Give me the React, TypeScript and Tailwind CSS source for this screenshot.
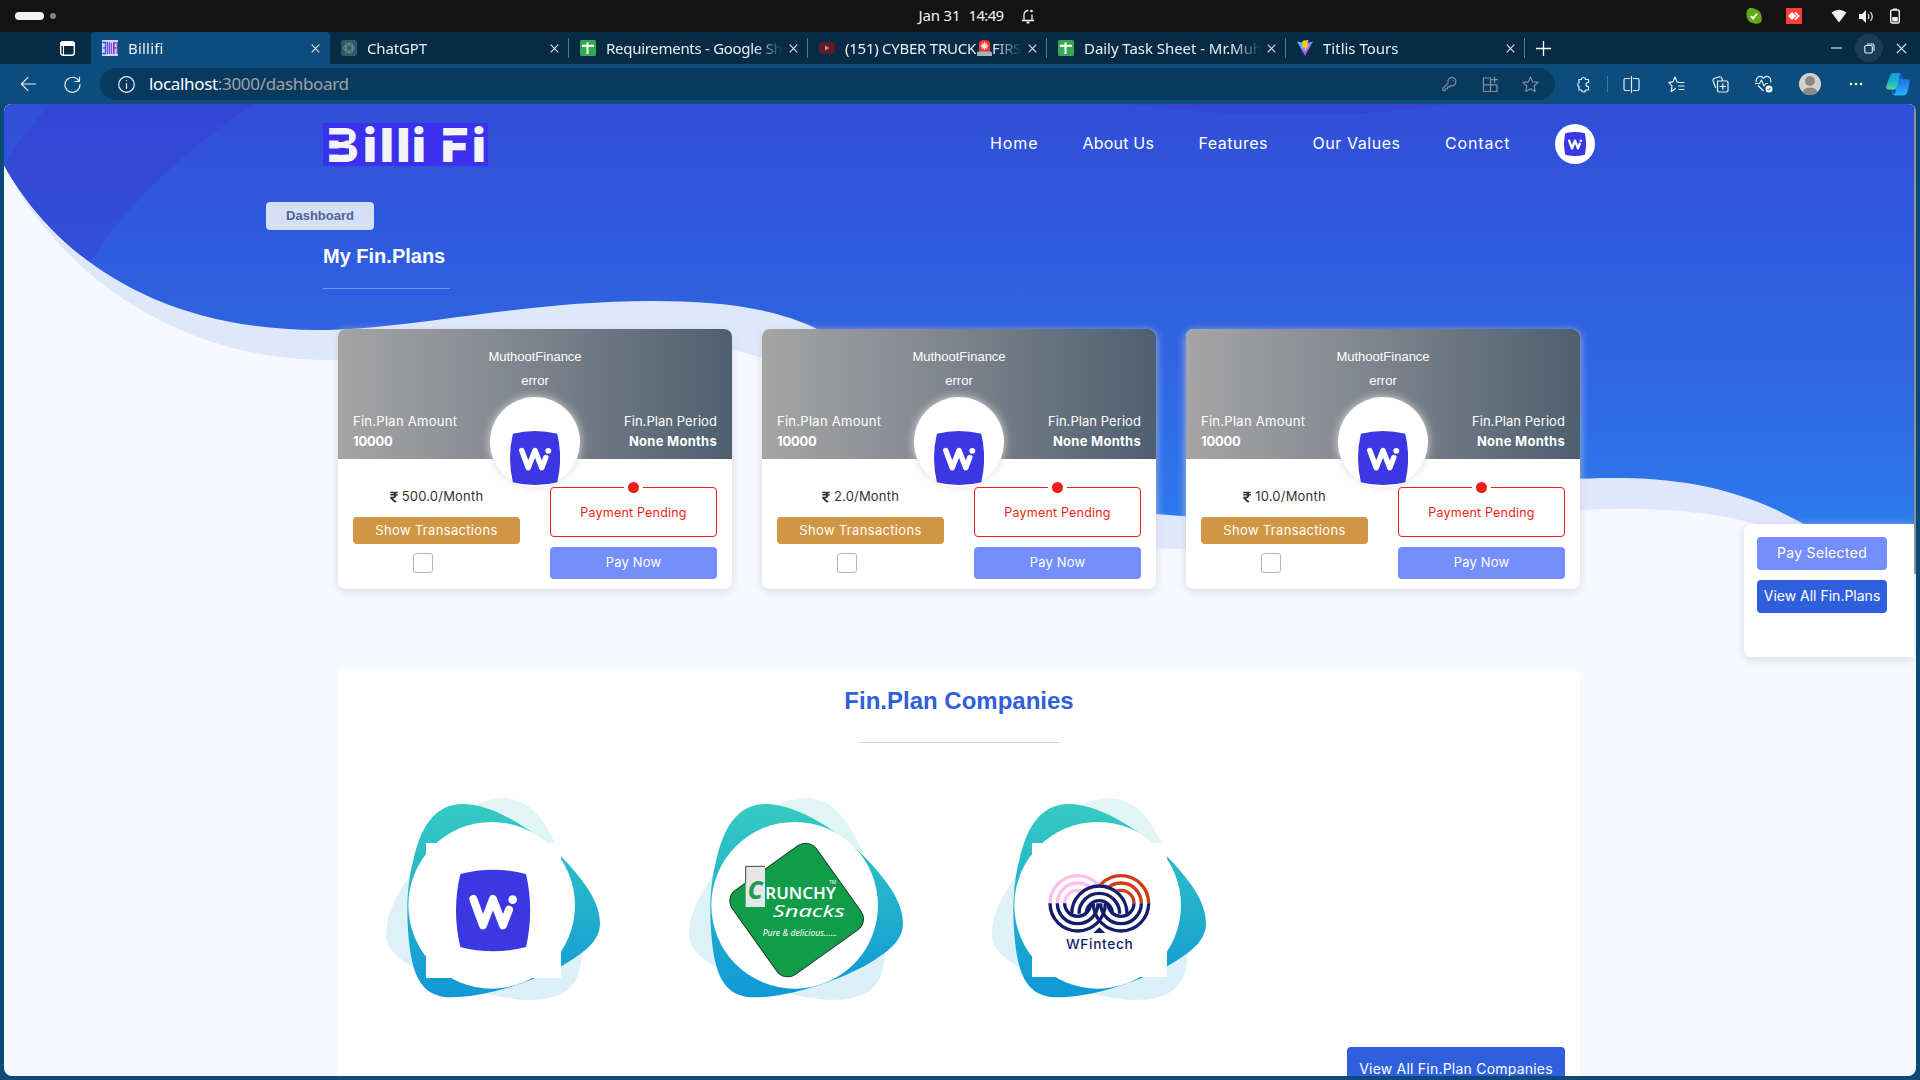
import type { ReactNode } from "react";
import { FaRupeeSign } from "react-icons/fa";

/* ---------- Logos ---------- */

function WiMark({ className }: { className: string }) {
  return (
    <svg className={className} viewBox="288 269 222 245" preserveAspectRatio="none">
      <path d="M301 282Q399 256 498 282Q523 391 498 501Q399 527 301 501Q275 391 301 282Z" fill="#3b37e3" />
      <path d="M340 357L369 436L399 357L429 436L447 389" fill="none" stroke="#fff" strokeWidth="24" strokeLinecap="round" strokeLinejoin="round" />
      <circle cx="458" cy="359" r="13" fill="#fff" />
    </svg>
  );
}

function BilliFiLogo() {
  return (
    <svg className="h-[43px] w-[165px]" viewBox="0 0 165 43">
      <rect width="165" height="43" fill="#3a30ee" />
      <text x="4 40 57 73.5 89 118 149" y="39" fontFamily="Inter, sans-serif" fontWeight="900" fontSize="46.5" fill="#f4f4f6">BilliFi</text>
      <rect x="4" y="11.5" width="22" height="6" fill="#3a30ee" />
      <rect x="4" y="25.5" width="22" height="6" fill="#3a30ee" />
      <rect x="117" y="12.5" width="32" height="5" fill="#3a30ee" />
    </svg>
  );
}

/* ---------- System bar ---------- */

function SystemBar() {
  return (
    <div className="grid h-8 grid-cols-[1fr_auto_1fr] items-center bg-[#131313]">
      <div className="flex items-center gap-1.5 pl-[15px]">
        <span className="h-2 w-[29px] rounded-full bg-[#f2f2f2]" />
        <span className="size-1.5 rounded-full bg-[#868686]" />
      </div>
      <div className="flex translate-x-[17px] items-center pb-[2px] text-[15px] text-[#f2f2f2]">
        <span className="w-[50px] tracking-[-0.14px]">Jan 31</span>
        <span className="w-[51px] tracking-[-0.67px]">14:49</span>
        <svg className="mt-px h-4 w-4" viewBox="0 0 16 16" fill="none" stroke="#f2f2f2" strokeWidth="1.3">
          <path d="M2 12.5H14M4 12V7Q4 2.5 8.5 2.5M12 12V6.5" />
          <path d="M6.5 14.5H9.5" strokeWidth="2" />
          <circle cx="11.5" cy="3" r="1.3" fill="#f2f2f2" stroke="none" />
        </svg>
      </div>
      <div className="flex items-center justify-end pr-5">
        <svg className="mr-6 size-4" viewBox="0 0 16 16">
          <path d="M4 0Q7-.3 9 1Q15 2 15.5 9Q17 15 11 15.800Q8 16 7 15Q1 14 .5 7Q0 1 4 0Z" fill="#62aa14" />
          <path d="M5 8L7 10.500L11 5.500" fill="none" stroke="#fff" strokeWidth="2" />
        </svg>
        <svg className="mr-[29px] size-4" viewBox="0 0 16 16">
          <rect width="16" height="16" fill="#ff3f35" />
          <path d="M2 8L6 4L10 8L6 12Z" fill="#fff" />
          <path d="M9 4.500L12.500 8L9 11.500" fill="none" stroke="#fff" strokeWidth="1.800" />
        </svg>
        <svg className="mr-3 size-4" viewBox="0 0 16 16"><path d="M.5 4.500Q8-1 15.500 4.500L8 14.500Z" fill="#f2f2f2" /></svg>
        <svg className="mr-4 size-[15px]" viewBox="0 0 15 15">
          <path d="M0 5H3L7 1V14L3 10H0Z" fill="#f2f2f2" />
          <path d="M9 5Q10.800 7.500 9 10M11.500 3Q15 7.500 11.500 12" fill="none" stroke="#f2f2f2" strokeWidth="1.200" />
        </svg>
        <svg className="h-4 w-[10px]" viewBox="0 0 10 16">
          <rect x=".7" y="2" width="8.600" height="13" rx="1.500" fill="none" stroke="#f2f2f2" strokeWidth="1.400" />
          <path d="M3 .5H7V2H3ZM2.300 9H7.700V13.500H2.300Z" fill="#f2f2f2" />
        </svg>
      </div>
    </div>
  );
}

/* ---------- Browser tabs ---------- */

const favicons: Record<string, ReactNode> = {
  billifi: (
    <svg className="size-4" viewBox="0 0 16 16">
      <rect width="16" height="16" fill="#d9d2f5" />
      <path d="M.5 2.500H3.500V13.500H.5M1 8H3" fill="none" stroke="#3a4fe0" strokeWidth="1.300" />
      <path d="M5.500 2V14M7.500 2V14" stroke="#5546d8" strokeWidth="1.200" />
      <path d="M9.500 3V14" stroke="#8a45d8" strokeWidth="1.200" />
      <path d="M11.800 14V3H14M11.800 8H14" fill="none" stroke="#7a2fc0" strokeWidth="1.500" />
      <path d="M15.200 2V14" stroke="#3a1c90" strokeWidth="1" />
    </svg>
  ),
  chatgpt: (
    <svg className="size-4" viewBox="0 0 16 16">
      <rect width="16" height="16" rx="3" fill="#2d5a63" />
      <g fill="none" stroke="#6f8f99" strokeWidth=".8">
        <ellipse cx="8" cy="8" rx="5.500" ry="3" />
        <ellipse cx="8" cy="8" rx="5.500" ry="3" transform="rotate(60 8 8)" />
        <ellipse cx="8" cy="8" rx="5.500" ry="3" transform="rotate(120 8 8)" />
      </g>
    </svg>
  ),
  sheet: (
    <svg className="size-4" viewBox="0 0 16 16">
      <rect width="16" height="16" rx="1.500" fill="#34a853" />
      <path d="M2 5.800H14M7.500 2.500V14" stroke="#fff" strokeWidth="2" />
    </svg>
  ),
  youtube: (
    <svg className="size-4" viewBox="0 0 16 16">
      <rect y="2.500" width="16" height="11" rx="3" fill="#6a1625" />
      <path d="M6 5.500L10.500 8L6 10.500Z" fill="#9aa5b0" />
    </svg>
  ),
  vite: (
    <svg className="size-4" viewBox="0 0 16 16">
      <defs>
        <linearGradient id="vite" x1="0" y1="0" x2=".6" y2="1">
          <stop offset="0" stopColor="#41d1ff" />
          <stop offset="1" stopColor="#bd34fe" />
        </linearGradient>
      </defs>
      <path d="M0 1.500L8 16L16 1.500L8 3Z" fill="url(#vite)" />
      <path d="M5.500.8L11.500 0L10 4.500H12L7.500 12L8 7.500H5Z" fill="#ffc820" />
    </svg>
  ),
};

function Siren() {
  return (
    <svg className="ml-px h-4 w-[15px] shrink-0" viewBox="0 0 15 16">
      <path d="M2 12V3Q2.500 0 7.500 0Q12.500 0 13 3V12Z" fill="#f2392c" />
      <path d="M7.500 2V10M3.800 6H11.200M5 3.500L10 8.500M10 3.500L5 8.500" stroke="#ffe3d8" strokeWidth="1.300" />
      <path d="M0 13Q0 11.500 1.500 11.500H13.500Q15 11.500 15 13V16H0Z" fill="#9fb6bf" />
    </svg>
  );
}

const fade = "[mask-image:linear-gradient(to_right,#000_84%,transparent_100%)]";

const tabs: { icon: string; title: ReactNode; track: string; active?: boolean; divider?: boolean }[] = [
  { icon: "billifi", title: "Billifi", track: "tracking-[0.2px]", active: true },
  { icon: "chatgpt", title: "ChatGPT", track: "tracking-[-0.13px]", divider: true },
  { icon: "sheet", title: "Requirements - Google Sh", track: "tracking-[-0.29px]", divider: true },
  { icon: "youtube", title: <>(151) CYBER TRUCK<Siren />FIRS</>, track: "tracking-[-0.26px]", divider: true },
  { icon: "sheet", title: "Daily Task Sheet - Mr.Muh", track: "tracking-[-0.05px]", divider: true },
  { icon: "vite", title: "Titlis Tours", track: "tracking-[0px]", divider: true },
];

function Cross({ className }: { className: string }) {
  return (
    <svg className={className} viewBox="0 0 10 10" fill="none" stroke="#dfe8ef" strokeWidth="1.200">
      <path d="M.8.8L9.200 9.200M9.200.8L.8 9.200" />
    </svg>
  );
}

function TabStrip() {
  return (
    <div className="flex h-8 items-stretch bg-[#072a45]">
      <div className="flex w-[91px] items-center pl-[60px]">
        <svg className="size-[15px]" viewBox="0 0 15 15">
          <rect x=".7" y=".7" width="13.600" height="13.600" rx="2.500" fill="none" stroke="#fff" strokeWidth="1.400" />
          <path d="M1 1H14V4.500H1ZM3.500 4V14" fill="#fff" stroke="#fff" strokeWidth="1" />
        </svg>
      </div>
      {tabs.map((t, i) => (
        <div
          key={i}
          className={
            t.active
              ? "flex w-[239px] items-center rounded-t bg-[#0c4d7d] pl-[11px]"
              : "flex w-[239px] items-center pl-[11px]"
          }
        >
          {favicons[t.icon]}
          <div className={`-mt-px ml-[10px] flex w-[177px] items-center overflow-hidden whitespace-nowrap text-[15px] leading-6 text-[#e8eff5] ${t.track} ${fade}`}>
            {t.title}
          </div>
          <Cross className="ml-[6px] size-[9px]" />
          {t.divider && <span className="ml-auto h-5 w-px bg-[#5b7488]" />}
        </div>
      ))}
      <div className="flex w-9 items-center justify-center">
        <svg className="size-[15px]" viewBox="0 0 15 15" stroke="#fff" strokeWidth="1.300"><path d="M0 7.500H15M7.500 0V15" /></svg>
      </div>
      <div className="ml-auto flex items-center pr-[13px]">
        <span className="mr-[13px] h-[2px] w-[11px] bg-[#8394a2]" />
        <span className="mr-[13px] flex size-7 items-center justify-center rounded-full bg-[#1c3c55]">
          <svg className="size-[11px]" viewBox="0 0 11 11" fill="none" stroke="#e8eff5" strokeWidth="1.100">
            <rect x=".8" y="2.500" width="7.500" height="7.500" rx="1.200" />
            <path d="M3 1H8.500Q10 1 10 2.500V8" />
          </svg>
        </span>
        <Cross className="size-[11px]" />
      </div>
    </div>
  );
}

/* ---------- Toolbar ---------- */

function Cell({ children, w = "w-11" }: { children: ReactNode; w?: string }) {
  return <span className={`flex h-8 shrink-0 items-center justify-center ${w}`}>{children}</span>;
}

function Line({ d, className = "size-[17px]", stroke = "#e6eef5" }: { d: string; className?: string; stroke?: string }) {
  return (
    <svg className={className} viewBox="0 0 17 17" fill="none" stroke={stroke} strokeWidth="1.200" strokeLinecap="round" strokeLinejoin="round">
      <path d={d} />
    </svg>
  );
}

const starPath = "M8.500 1L10.700 5.800L16 6.400L12.100 10L13.200 15.500L8.500 12.800L3.800 15.500L4.900 10L1 6.400L6.300 5.800Z";

function Toolbar() {
  return (
    <div className="flex h-10 items-center bg-[#0c4d7d] pl-1.5">
      <Cell><Line d="M16 8.500H1M8 1.500L1 8.500L8 15.500" className="h-[16px] w-[17px]" /></Cell>
      <Cell><Line d="M15 5A7.500 7.500 0 1 0 16 8.500M15.500 1V5.500H11" /></Cell>
      <div className="ml-1.5 flex h-8 w-[1455px] items-center rounded-full bg-[#083a5f] pl-[18px]">
        <Line className="size-[17px]" d="M8.500.7A7.800 7.800 0 1 0 8.500 16.300A7.800 7.800 0 1 0 8.500.7M8.500 7.500V12.500M8.500 4.500V4.700" />
        <div className="ml-[14px] text-[17px] leading-8 tracking-[-0.33px] text-[#a3a09f]">
          <span className="text-white">localhost</span>:3000/dashboard
        </div>
        <div className="ml-auto mr-[5px] flex">
          <Cell w="w-10"><Line stroke="#85909a" className="size-4" d="M10.500 1.500A4.500 4.500 0 1 1 9 10.300L8 11.500H6V13.500H4L3 15.500H1V13L6.500 7.500A4.500 4.500 0 0 1 10.500 1.500M12 4.800V5" /></Cell>
          <Cell w="w-10"><Line stroke="#85909a" d="M1.500 2H8.500V15.500H1.500ZM1.500 8.800H15V15.500H8.500M12.500 1V6.500M9.800 3.700H15.500" /></Cell>
          <Cell w="w-10"><Line stroke="#85909a" d={starPath} /></Cell>
        </div>
      </div>
      <Cell w="w-[57px]"><Line d="M5 3.500H6.500A2 2 0 0 1 10.500 3.500H13.500V6.500Q11 6.500 11 8.500Q11 10.500 13.500 10.500V14H10.500A2 2 0 0 1 6.500 14H4V10.500A2 2 0 0 1 4 6.800V3.500Z" /></Cell>
      <span className="-ml-[5px] h-4 w-px bg-[#4a789b]" />
      <Cell w="w-[46px]"><Line d="M6.500 2.500H2.500Q1 2.500 1 4V13Q1 14.500 2.500 14.500H6.500M10.500 2.500H14.500Q16 2.500 16 4V13Q16 14.500 14.500 14.500H10.500M8.500.5V16.500" /></Cell>
      <Cell><Line d="M10.500 6L9 5.800L7 1L5 5.800L.8 6.400L4 10L3.200 15.500L7.500 12.500M11 6.500H16M10.500 10H16M11 13.500H16" /></Cell>
      <Cell><Line d="M3.500 11.500L1 4.500Q.8 3 2 2.500L7.500 .8Q9 .5 10 2.500L10.500 4M5.500 5H14.500Q16 5 16 6.500V14.500Q16 16 14.500 16H7Q5.500 16 5.500 14.500V5M10.800 7.800V13.200M8 10.500H13.500" /></Cell>
      <Cell>
        <svg className="size-[18px]" viewBox="0 0 18 18" fill="none" stroke="#e6eef5" strokeWidth="1.200" strokeLinejoin="round">
          <path d="M8.500 3.500Q6.500.5 3.500 1.700Q.5 3.500 1.300 7M8.500 3.500Q10.500.5 13.500 1.700Q16.500 3.500 15.700 7.500M3 10.500L8.500 16M0 8.500H4.500L6.500 5L9 11L11 8.500H13" />
          <circle cx="14" cy="14" r="3.500" fill="#fff" stroke="none" />
          <path d="M12.500 14L13.600 15.200L15.500 12.800" stroke="#0c4d7d" strokeWidth="1" />
        </svg>
      </Cell>
      <Cell w="w-[48px]">
        <svg className="size-[22px] rounded-full" viewBox="0 0 22 22">
          <rect width="22" height="22" fill="#d3d1ce" />
          <circle cx="11" cy="8" r="5" fill="#8c8985" />
          <path d="M3 22Q3 14.500 11 14.500Q19 14.500 19 22Z" fill="#8c8985" />
        </svg>
      </Cell>
      <Cell>
        <svg className="h-1 w-[14px]" viewBox="0 0 14 4" fill="#fff"><circle cx="2" cy="2" r="1.300" /><circle cx="7" cy="2" r="1.300" /><circle cx="12" cy="2" r="1.300" /></svg>
      </Cell>
      <Cell w="w-10">
        <svg className="h-[23px] w-6" viewBox="0 0 24 23">
          <defs>
            <linearGradient id="cp1" x1="0" y1="0" x2="0" y2="1"><stop offset="0" stopColor="#1a9be0" /><stop offset=".5" stopColor="#14b4c8" /><stop offset="1" stopColor="#5fd68a" /></linearGradient>
            <linearGradient id="cp2" x1="0" y1="0" x2="0" y2="1"><stop offset="0" stopColor="#1e6fe8" /><stop offset="1" stopColor="#22b8f5" /></linearGradient>
          </defs>
          <path d="M12 6H21Q24.500 6 23.700 9.500L21.500 18.500Q20.500 22.500 17 22.500H9Q6.500 22 5.500 17Z" fill="url(#cp2)" />
          <path d="M5.500 16.500H10L9 21Q6.500 21 5.500 16.500Z" fill="#1746c8" />
          <path d="M4 3Q5 0 8 0H14.500L11 13Q10 16.500 6.500 16.500H2.500Q-.5 16.500 .3 13Z" fill="url(#cp1)" />
          <path d="M14.500 0Q16.500 1 17.500 6H12.800Z" fill="#1b4fd0" />
        </svg>
      </Cell>
    </div>
  );
}

/* ---------- Dashboard page ---------- */

function Waves() {
  return (
    <svg className="absolute inset-0 h-[972px] w-[1912px]" viewBox="4 104 1912 972">
      <defs>
        <linearGradient id="sea" gradientUnits="userSpaceOnUse" x1="0" y1="104" x2="0" y2="530">
          <stop offset="0" stopColor="#314ed8" />
          <stop offset=".45" stopColor="#2f60e0" />
          <stop offset=".65" stopColor="#2f67e4" />
          <stop offset="1" stopColor="#2d7aee" />
        </linearGradient>
        <linearGradient id="deep" gradientUnits="userSpaceOnUse" x1="0" y1="104" x2="0" y2="290">
          <stop offset="0" stopColor="#3545d5" />
          <stop offset="1" stopColor="#3252d9" />
        </linearGradient>
        <clipPath id="waveClip">
          <path d="M4 104H1916V572C1880 558 1840 546 1802 523C1740 488 1680 478 1614 478C1480 478 1390 516 1270 519C1230 520 1195 517 1156 514C980 495 920 385 817 329C775 308 720 301 652 301C520 301 410 330 318 330C140 330 45 240 4 165Z" />
        </clipPath>
      </defs>
      <path d="M4 165C45 250 155 360 330 360C450 360 560 330 660 336C700 339 732 349 762 358C900 400 980 532 1156 548C1300 556 1450 509 1628 509C1680 509 1715 514 1753 523C1810 538 1870 565 1916 574V104H4Z" fill="#dfe8fb" />
      <g clipPath="url(#waveClip)">
        <rect x="4" y="104" width="1912" height="560" fill="url(#sea)" />
        <path d="M51 104H255C190 145 125 205 91 262L60 300L4 200V165Q25 130 51 104Z" fill="url(#deep)" />
        <path d="M1130 104Q1210 115 1295 115Q1380 115 1447 104Z" fill="#3545d5" />
      </g>
    </svg>
  );
}

const links = [
  { text: "Home", cls: "w-[47.500px] tracking-[0.9px]" },
  { text: "About Us", cls: "w-[71px] tracking-[0.2px]" },
  { text: "Features", cls: "w-[69px] tracking-[0.5px]" },
  { text: "Our Values", cls: "w-[87.500px] tracking-[0.55px]" },
  { text: "Contact", cls: "w-[65px] tracking-[0.85px]" },
];

function NavBar() {
  return (
    <nav className="flex h-20 items-center pl-[319px]">
      <div className="w-[667px] pt-px"><BilliFiLogo /></div>
      <div className="flex gap-[45px] pb-[2px] text-base text-white">
        {links.map((l) => (
          <a key={l.text} className={`whitespace-nowrap ${l.cls}`}>{l.text}</a>
        ))}
      </div>
      <span className="ml-[45px] flex size-10 items-center justify-center rounded-full bg-white">
        <WiMark className="h-6 w-[22px]" />
      </span>
      <span className="ml-[5px] mt-1 border-x-4 border-t-4 border-x-transparent border-t-[#4546f0]" />
    </nav>
  );
}

function PlanCard({ amount }: { amount: string }) {
  return (
    <article className="relative h-[260px] w-[394px] rounded-lg bg-white text-[13px] shadow-[0_2px_10px_rgba(205,207,214,0.8)]">
      <header className="flex h-[130px] flex-col rounded-t-lg bg-[linear-gradient(to_right,#a5a5a5,#868a91_40%,#4d5f70)] px-[15px] text-white">
        <div className="flex flex-col items-center pt-4 font-['Liberation_Sans',sans-serif] leading-6">
          <span>MuthootFinance</span>
          <span>error</span>
        </div>
        <div className="mt-auto flex justify-between pb-2 leading-5">
          <div>
            <p className="tracking-[0.27px]">Fin.Plan Amount</p>
            <p className="font-bold tracking-[-0.2px]">10000</p>
          </div>
          <div className="text-right">
            <p className="tracking-[0.06px]">Fin.Plan Period</p>
            <p className="font-bold tracking-[0.27px]">None Months</p>
          </div>
        </div>
      </header>
      <div className="absolute left-[152px] top-[68px] flex h-[90px] w-[90px] justify-center rounded-full bg-white pt-[34px] shadow-[0_0_10px_#ddd]">
        <WiMark className="h-[54px] w-[50px]" />
      </div>
      <div className="relative grid grid-cols-2 gap-[30px] px-[15px] pt-7">
        <div className="flex flex-col">
          <div className="flex h-[18px] items-center justify-center gap-1 pt-[2px] tracking-[0.2px] text-[#333]">
            <FaRupeeSign className="-mt-px h-[12px] w-[8px]" />
            <span>{amount}/Month</span>
          </div>
          <button className="mt-3 h-[27px] rounded bg-[#d19643] tracking-[0.33px] text-white">Show Transactions</button>
          <span className="ml-[60px] mt-[9px] size-5 rounded-[3px] border border-[#b5b5b5] bg-white" />
        </div>
        <div className="flex flex-col">
          <div className="relative flex h-[50px] items-center justify-center rounded border border-[#f01c1c] pt-[2px] text-[12.5px] tracking-[0.2px] text-[#f01c1c]">
            Payment Pending
            <span className="absolute -top-[6px] left-[73px] flex h-[11px] w-[19px] items-center justify-center bg-white">
              <span className="size-[11px] rounded-full bg-[#f01c1c]" />
            </span>
          </div>
          <button className="mt-[10px] h-8 rounded bg-[#748efc] tracking-[0.15px] text-white">Pay Now</button>
        </div>
      </div>
    </article>
  );
}

function CrunchyLogo() {
  return (
    <g transform="translate(21 0)">
      <rect x="225" y="235" width="310" height="310" rx="40" transform="rotate(-35.500 380 390)" fill="#109c49" stroke="#1d3a28" strokeWidth="3" />
      <rect x="227" y="259" width="58" height="122" fill="#e6e6e6" />
      <path d="M227 308V259H285" fill="none" stroke="#444" strokeWidth="3" />
      <g fontFamily="'Noto Sans', sans-serif" fill="#fff">
        <text x="233" y="357" fontSize="74" fontWeight="800" fontStyle="italic" fill="#1c9c50" textLength="45" lengthAdjust="spacingAndGlyphs">C</text>
        <text x="286" y="358" fontSize="50" fontWeight="600" textLength="212" lengthAdjust="spacingAndGlyphs">RUNCHY</text>
        <text x="477" y="311" fontSize="15" textLength="22" lengthAdjust="spacingAndGlyphs">TM</text>
        <text x="308" y="411" fontSize="50" fontStyle="italic" textLength="216" lengthAdjust="spacingAndGlyphs">Snacks</text>
        <text x="278" y="469" fontSize="24" fontStyle="italic" textLength="224" lengthAdjust="spacingAndGlyphs">Pure &amp; delicious......</text>
      </g>
    </g>
  );
}

const rings = [83, 61, 39];

function WFintechLogo() {
  return (
    <g transform="translate(12 0)" fill="none" strokeWidth="10">
      <rect x="186" y="189" width="405" height="402" fill="#fff" />
      {rings.map((r) => (
        <path key={`o${r}`} d={`M${453 - r} 370A${r} ${r} 0 0 1 ${453 + r} 370`} stroke="#cf3c17" />
      ))}
      {rings.map((r) => (
        <path key={`p${r}`} d={`M${323 - r} 370A${r} ${r} 0 0 1 ${323 + r} 370`} stroke="#ffbfe6" />
      ))}
      <path d="M300 401A88 88 0 0 1 476 401Z" fill="#fff" />
      {rings.map((r) => (
        <path key={`l${r}`} d={`M${323 - r} 370A${r} ${r} 0 0 0 ${323 + r} 370M${453 - r} 370A${r} ${r} 0 0 0 ${453 + r} 370`} stroke="#141c6b" />
      ))}
      {rings.map((r) => (
        <path key={`a${r}`} d={`M${388 - r} 401A${r} ${r} 0 0 1 ${388 + r} 401`} stroke="#141c6b" />
      ))}
      <path d="M388 442L406 459H370Z" fill="#141c6b" />
      <text x="288" y="508" fontFamily="Inter, sans-serif" fontSize="41" fontWeight="500" fill="#141c6b" textLength="200">WFintech</text>
    </g>
  );
}

function CompanyBlob({ id, children }: { id: string; children: ReactNode }) {
  return (
    <svg className="h-60 w-[303px] shrink-0" viewBox="0 0 909 720">
      <defs>
        <linearGradient id={`${id}a`} x1="0" y1="0" x2="0" y2="1"><stop offset="0" stopColor="#35cbc1" /><stop offset="1" stopColor="#1098d6" /></linearGradient>
        <linearGradient id={`${id}b`} x1="0" y1="0" x2="0" y2="1"><stop offset="0" stopColor="#e1f6f4" /><stop offset="1" stopColor="#dbeff8" /></linearGradient>
      </defs>
      <path d="M430 55C510 55 555 120 600 215C650 320 670 420 667 500C664 600 640 660 500 660C380 655 240 600 160 562C110 535 78 500 78 465C78 400 110 345 155 280C220 190 300 55 430 55Z" fill={`url(#${id}b)`} />
      <path d="M308 72C410 72 540 165 610 236C680 310 720 370 720 430C720 480 680 515 605 558C500 612 370 652 275 652C200 652 165 610 150 510C138 420 138 320 160 240C180 150 220 72 308 72Z" fill={`url(#${id}a)`} />
      <circle cx="395" cy="376" r="250" fill="#fff" />
      {children}
    </svg>
  );
}

function Companies() {
  return (
    <section className="ml-[334px] mt-20 flex h-[420px] w-[1242px] flex-col rounded-t-lg bg-white">
      <h2 className="pt-4 text-center font-['Liberation_Sans',sans-serif] text-2xl font-bold leading-8 text-[#2f5fdd]">Fin.Plan Companies</h2>
      <div className="mx-auto mt-[25px] h-px w-[200px] shrink-0 bg-[#c3d1f6]" />
      <div className="mt-[37px] flex shrink-0 pl-[22px]">
        <CompanyBlob id="wi">
          <rect x="198" y="189" width="405" height="405" fill="#fff" />
          <path d="M301 282Q399 256 498 282Q523 391 498 501Q399 527 301 501Q275 391 301 282Z" fill="#3b37e3" />
          <path d="M340 357L369 436L399 357L429 436L447 389" fill="none" stroke="#fff" strokeWidth="24" strokeLinecap="round" strokeLinejoin="round" />
          <circle cx="458" cy="359" r="13" fill="#fff" />
        </CompanyBlob>
        <CompanyBlob id="crunchy"><CrunchyLogo /></CompanyBlob>
        <CompanyBlob id="wfintech"><WFintechLogo /></CompanyBlob>
      </div>
      <button className="ml-auto mr-[15px] mt-[27px] h-[44px] w-[218px] shrink-0 whitespace-nowrap rounded bg-[#2f5fdd] text-sm tracking-[0.22px] text-white">
        View All Fin.Plan Companies
      </button>
    </section>
  );
}

export default function App() {
  return (
    <div className="flex h-[1080px] w-[1920px] flex-col overflow-hidden bg-[#0c4a78] font-['Noto_Sans',sans-serif]">
      <SystemBar />
      <TabStrip />
      <Toolbar />
      <main className="relative mx-1 h-[972px] overflow-hidden rounded-lg bg-[#f6f9ff] font-['Inter',sans-serif]">
        <Waves />
        <div className="relative flex flex-col">
          <NavBar />
          <span className="ml-[262px] mt-[18px] flex h-7 w-[108px] items-center justify-center rounded bg-[#d6dff8] font-['Liberation_Sans',sans-serif] text-[13px] font-bold text-[#4f6591]">
            Dashboard
          </span>
          <h1 className="ml-[319px] mt-[11px] font-['Liberation_Sans',sans-serif] text-xl font-bold leading-[30px] text-white">My Fin.Plans</h1>
          <div className="ml-[319px] mt-[17px] h-px w-[127px] bg-white/35" />
          <div className="ml-[334px] mt-10 flex gap-[30px]">
            <PlanCard amount="500.0" />
            <PlanCard amount="2.0" />
            <PlanCard amount="10.0" />
          </div>
          <Companies />
        </div>
        <aside className="absolute right-[2px] top-[420px] flex h-[133px] w-[170px] flex-col gap-[10px] rounded-l-lg bg-white pl-[13px] pt-[13px] text-sm text-white shadow-[0_2px_10px_rgba(205,207,214,0.8)]">
          <button className="h-[33px] w-[130px] rounded bg-[#748efc] pb-[2px] tracking-[0.33px]">Pay Selected</button>
          <button className="h-[33px] w-[130px] whitespace-nowrap rounded bg-[#2f5fdd] pb-[2px]">View All Fin.Plans</button>
        </aside>
        <span className="absolute right-0 top-1 h-[466px] w-[2px] rounded bg-[#8b8f96]" />
      </main>
    </div>
  );
}
